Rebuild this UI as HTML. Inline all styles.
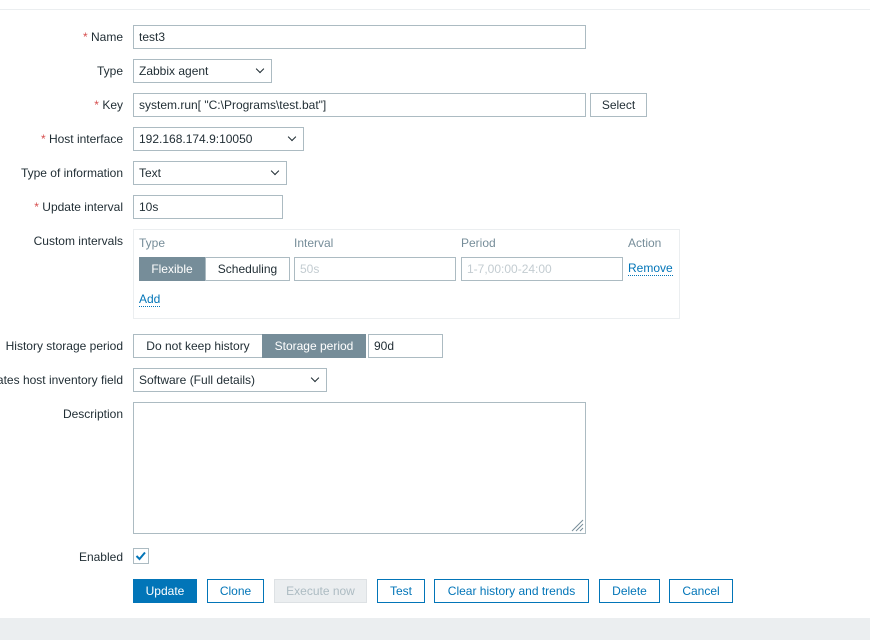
<!DOCTYPE html><html><head><style>
body{margin:0;width:870px;height:640px;background:#fff;font-family:"Liberation Sans",Arial,sans-serif;font-size:12px;color:#1f2c33;position:relative;overflow:hidden}
div,span{position:absolute;box-sizing:border-box}
.l{right:747px;text-align:right;white-space:nowrap;line-height:14px}
.r{color:#d64e4e}
.i{border:1px solid #acbbc2;background:#fff;height:24px;line-height:22px;padding-left:5px;white-space:nowrap}
.s::after{content:"";position:absolute;right:8px;top:6px;width:5px;height:5px;border-right:1px solid #1f2c33;border-bottom:1px solid #1f2c33;transform:rotate(45deg)}
.b{border:1px solid #0275b8;color:#0275b8;height:24px;line-height:22px;text-align:center;background:#fff}
.g{color:#768d99}
.lnk{color:#0275b8;border-bottom:1px dotted #0275b8;line-height:13px}
</style></head><body>
<div style="left:0;top:9px;width:870px;height:1px;background:#ebeef0"></div>
<div class="l" style="top:30px"><span class="r" style="position:static">* </span>Name</div>
<div class="i" style="left:133px;top:25px;width:453px">test3</div>
<div class="l" style="top:64px">Type</div>
<div class="i s" style="left:133px;top:59px;width:139px">Zabbix agent</div>
<div class="l" style="top:98px"><span class="r" style="position:static">* </span>Key</div>
<div class="i" style="left:133px;top:93px;width:453px">system.run[ "C:\Programs\test.bat"]</div>
<div class="i" style="left:590px;top:93px;width:57px;padding:0;text-align:center">Select</div>
<div class="l" style="top:132px"><span class="r" style="position:static">* </span>Host interface</div>
<div class="i s" style="left:133px;top:127px;width:171px">192.168.174.9:10050</div>
<div class="l" style="top:166px">Type of information</div>
<div class="i s" style="left:133px;top:161px;width:154px">Text</div>
<div class="l" style="top:200px"><span class="r" style="position:static">* </span>Update interval</div>
<div class="i" style="left:133px;top:195px;width:150px">10s</div>
<div class="l" style="top:234px">Custom intervals</div>
<div style="left:133px;top:229px;width:547px;height:90px;border:1px solid #ebeef0"></div>
<div class="g" style="left:139px;top:236px">Type</div>
<div class="g" style="left:294px;top:236px">Interval</div>
<div class="g" style="left:461px;top:236px">Period</div>
<div class="g" style="left:628px;top:236px">Action</div>
<div style="left:139px;top:257px;width:66px;height:24px;background:#768d99;color:#fff;line-height:24px;text-align:center">Flexible</div>
<div class="i" style="left:205px;top:257px;width:85px;padding:0;text-align:center">Scheduling</div>
<div class="i" style="left:294px;top:257px;width:162px;color:#c3ccd1">50s</div>
<div class="i" style="left:461px;top:257px;width:162px;color:#c3ccd1">1-7,00:00-24:00</div>
<div class="lnk" style="left:628px;top:262px">Remove</div>
<div class="lnk" style="left:139px;top:293px">Add</div>
<div class="l" style="top:339px">History storage period</div>
<div class="i" style="left:133px;top:334px;width:130px;padding:0;text-align:center">Do not keep history</div>
<div style="left:262px;top:334px;width:104px;height:24px;background:#768d99;color:#fff;line-height:24px;text-align:center">Storage period</div>
<div class="i" style="left:368px;top:334px;width:75px">90d</div>
<div class="l" style="top:373px">Populates host inventory field</div>
<div class="i s" style="left:133px;top:368px;width:194px">Software (Full details)</div>
<div class="l" style="top:407px">Description</div>
<div class="i" style="left:133px;top:402px;width:453px;height:132px"></div>
<svg style="position:absolute;left:570px;top:518px" width="14" height="14"><path d="M13 2L2 13M13 6L6 13M13 10L10 13" stroke="#768d99" stroke-width="1"/></svg>
<div class="l" style="top:550px">Enabled</div>
<div style="left:133px;top:548px;width:16px;height:16px;border:1px solid #acbbc2"></div>
<svg style="position:absolute;left:133px;top:548px" width="16" height="16"><path d="M3.5 8L6.5 11L12 4.5" stroke="#0275b8" stroke-width="2" fill="none"/></svg>
<div class="b" style="left:133px;top:579px;width:64px;background:#0275b8;color:#fff">Update</div>
<div class="b" style="left:207px;top:579px;width:57px">Clone</div>
<div class="b" style="left:274px;top:579px;width:93px;background:#ebeef0;border-color:#dde1e4;color:#acbbc2">Execute now</div>
<div class="b" style="left:377px;top:579px;width:48px">Test</div>
<div class="b" style="left:434px;top:579px;width:155px">Clear history and trends</div>
<div class="b" style="left:599px;top:579px;width:61px">Delete</div>
<div class="b" style="left:669px;top:579px;width:64px">Cancel</div>
<div style="left:0;top:618px;width:870px;height:22px;background:#ebeef0"></div>
</body></html>
